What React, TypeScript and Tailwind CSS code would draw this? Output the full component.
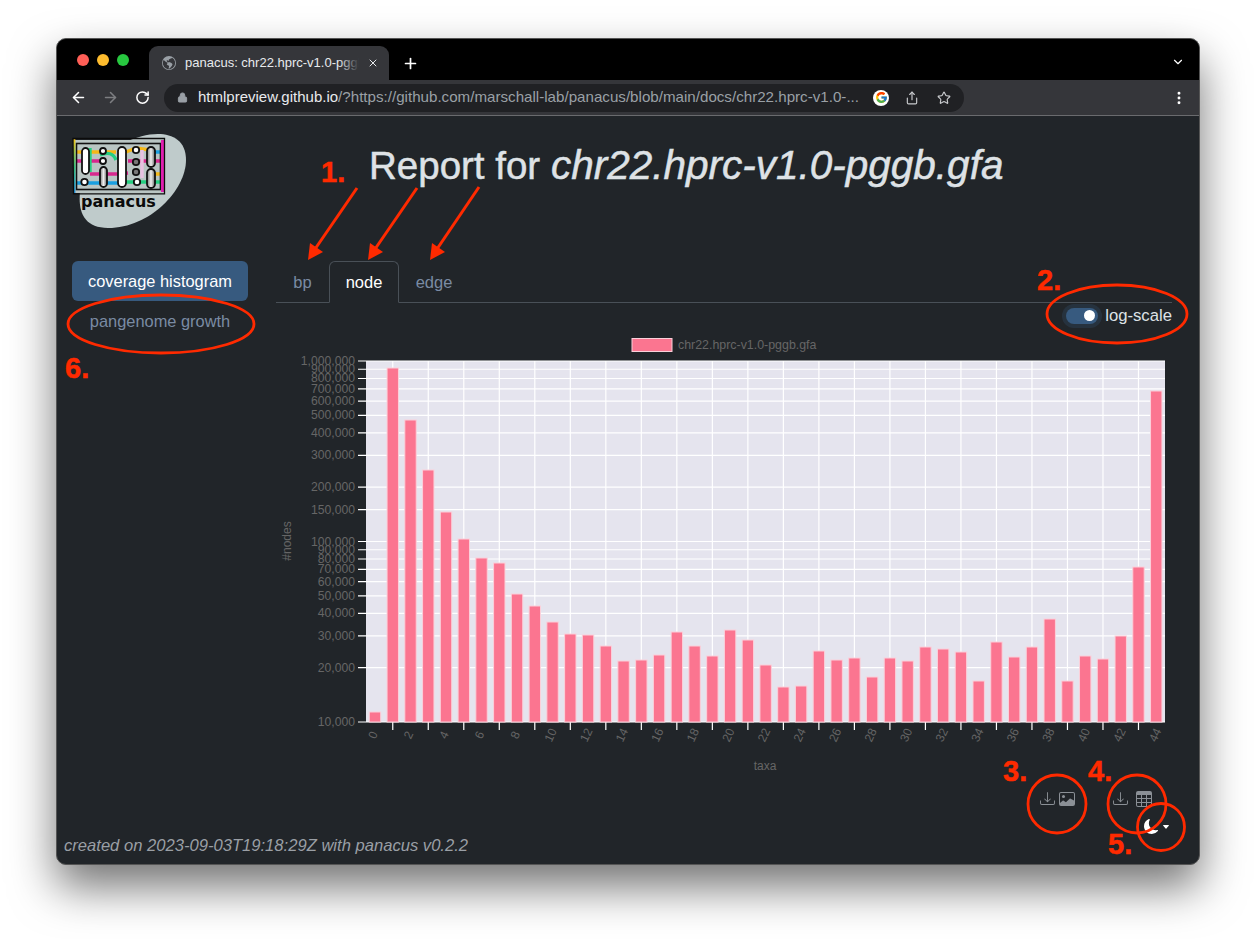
import React from "react";
import { ArrowLeft, ArrowRight, RotateCw, Lock, Share, Star, MoreVertical, ChevronDown, X, Plus } from "lucide-react";
import { BsDownload, BsImage, BsTable, BsMoonFill, BsGlobeAmericas, BsCaretDownFill } from "react-icons/bs";
import { FcGoogle } from "react-icons/fc";

const barTops = [
  712, 368, 420, 470, 512, 539, 558, 563, 594, 606, 622, 634, 635, 646, 661, 660, 655, 632, 646, 656, 630, 640, 665,
  687, 686, 651, 660, 658, 677, 658, 661, 647, 649, 652, 681, 642, 657, 647, 619, 681, 656, 659, 636, 567, 391,
];

const yTicks = [
  10000, 20000, 30000, 40000, 50000, 60000, 70000, 80000, 90000, 100000, 150000, 200000, 300000, 400000, 500000, 600000,
  700000, 800000, 900000, 1000000,
];

const yPos = (v: number) => 722 - (Math.log10(v) - 4) * 180.5;

function Logo() {
  return (
    <svg viewBox="70 130 120 100" className="w-[120px] h-[100px] -ml-[2px]">
      <defs>
        <linearGradient id="frame" x1="0" y1="0" x2="1" y2="0">
          <stop offset="0" stopColor="#f5c518" />
          <stop offset="0.45" stopColor="#f0a020" />
          <stop offset="0.75" stopColor="#e8352c" />
          <stop offset="1" stopColor="#e01fa0" />
        </linearGradient>
        <linearGradient id="frameLow" x1="0" y1="0" x2="1" y2="0">
          <stop offset="0" stopColor="#1a8fe0" />
          <stop offset="0.6" stopColor="#9a20d0" />
          <stop offset="1" stopColor="#e01fb0" />
        </linearGradient>
        <linearGradient id="frameLeft" x1="0" y1="0" x2="0" y2="1">
          <stop offset="0" stopColor="#f5c518" />
          <stop offset="0.5" stopColor="#30c070" />
          <stop offset="1" stopColor="#1a8fe0" />
        </linearGradient>
        <linearGradient id="pill" x1="0" y1="0" x2="1" y2="0">
          <stop offset="0" stopColor="#777" />
          <stop offset="0.5" stopColor="#eee" />
          <stop offset="1" stopColor="#666" />
        </linearGradient>
      </defs>
      <path d="M126 142C150 130 186 128 186 160C186 190 150 228 108 228C84 228 78 212 80 192Z" fill="#bfcbcb" />
      <rect x="74" y="140" width="89" height="53" fill="#b9c5c3" />
      <g fill="none" strokeWidth="3.4">
        <path d="M76 152H116" stroke="#f5b818" />
        <path d="M76 161H100M128 161H160" stroke="#d8288e" />
        <path d="M100 155Q112 150 116 160" stroke="#25cf80" />
        <path d="M90 174H118L128 173" stroke="#d8288e" />
        <path d="M126 152L136 148L150 150" stroke="#f5b818" />
        <path d="M76 183H118" stroke="#1a9fe0" />
        <path d="M126 182H160" stroke="#25cf80" />
        <path d="M142 150V178" stroke="#e8c0e0" />
        <path d="M90 148V172" stroke="#25cf80" />
        <path d="M155 152H162" stroke="#1a9fe0" />
        <path d="M155 174H162" stroke="#f5b818" />
      </g>
      <rect x="76.5" y="143.5" width="84" height="46" fill="none" stroke="#111" strokeWidth="1.6" />
      <path d="M74 140H163" fill="none" stroke="url(#frame)" strokeWidth="3" />
      <rect x="73" y="139" width="2.4" height="54" fill="url(#frameLeft)" />
      <path d="M162.5 140V192" fill="none" stroke="#e01fb0" strokeWidth="3" />
      <path d="M75 191.5H163" fill="none" stroke="url(#frameLow)" strokeWidth="3" />
      <path d="M73 138.5H164.5V193.8H73.5Z" fill="none" stroke="#0c0c0c" strokeWidth="1.3" />
      <g fill="#fff" stroke="#111" strokeWidth="1.8">
        <rect x="82" y="148" width="7" height="26" rx="3.5" />
        <circle cx="84.5" cy="182" r="3.2" />
        <circle cx="103" cy="151" r="3" />
        <circle cx="103" cy="161" r="3" />
        <rect x="100" y="167" width="7" height="20" rx="3.5" fill="url(#pill)" />
        <rect x="118" y="147" width="8" height="40" rx="4" />
        <circle cx="136" cy="150" r="3.2" />
        <circle cx="136" cy="162" r="3.2" fill="#777" />
        <circle cx="136" cy="172" r="3.2" fill="#777" />
        <circle cx="137" cy="182" r="3.2" />
        <rect x="147" y="147" width="8" height="20" rx="4" fill="url(#pill)" />
        <rect x="147" y="169" width="8" height="19" rx="4" fill="url(#pill)" />
      </g>
      <text x="81" y="207" fontFamily="'DejaVu Sans', sans-serif" fontWeight="700" fontSize="16" fill="#0b0b0b">
        panacus
      </text>
    </svg>
  );
}

function Chart() {
  const slot = 799 / 45;
  return (
    <svg viewBox="276 330 896 445" className="w-[896px] h-[445px] block" fontFamily="'Liberation Sans', sans-serif">
      <rect x="632" y="338.5" width="40" height="13" fill="#fb7590" stroke="#fbd0da" />
      <text x="678" y="349" fontSize="12.4" fill="#666">
        chr22.hprc-v1.0-pggb.gfa
      </text>
      <rect x="366" y="361" width="799" height="361" fill="#e5e4ee" />
      {yTicks.map((v) => (
        <g key={v}>
          <path d={`M358 ${yPos(v)}H1165`} stroke="#fff" strokeWidth="1.2" />
          <text x="355" y={yPos(v) + 4} fontSize="12.2" fill="#666" textAnchor="end">
            {v.toLocaleString("en-US")}
          </text>
        </g>
      ))}
      {Array.from({ length: 22 }).map((_, i) => {
        const x = 375 + slot * (2 * i + 1);
        return <path key={i} d={`M${x} 361V730`} stroke="#fff" strokeWidth="1.2" />;
      })}
      {Array.from({ length: 23 }).map((_, i) => {
        const lx = 373 + 35.55 * i;
        return (
          <text key={i} x={lx} y={739} fontSize="12" fill="#666" textAnchor="middle" transform={`rotate(-65 ${lx} 735)`}>
            {i * 2}
          </text>
        );
      })}
      {barTops.map((t, i) => (
        <rect
          key={i}
          x={375 + slot * i - 5.7}
          y={t}
          width={11.4}
          height={722 - t}
          fill="#fb7590"
          stroke="#fbd0da"
          strokeWidth="1"
        />
      ))}
      <text x="765" y="770" fontSize="12" fill="#666" textAnchor="middle">
        taxa
      </text>
      <text x="291" y="541" fontSize="12" fill="#666" textAnchor="middle" transform="rotate(-90 291 541)">
        #nodes
      </text>
    </svg>
  );
}

function Annotations() {
  const red = "#ff2a00";
  const labels: [string, number, number][] = [
    ["1.", 321, 182],
    ["2.", 1037, 290],
    ["3.", 1003, 781],
    ["4.", 1088, 781],
    ["5.", 1108, 854],
    ["6.", 65, 378],
  ];
  const arrows = [
    [357, 188, 308, 260],
    [417, 188, 368, 260],
    [479, 187, 430, 260],
  ];
  return (
    <svg viewBox="0 0 1256 939" className="absolute left-0 top-0 w-[1256px] h-[939px] pointer-events-none">
      {arrows.map(([a, b, c, d]) => (
        <g key={a}>
          <path d={`M${a} ${b}L${c + 5} ${d - 8}`} stroke={red} strokeWidth="3" />
          <path d={`M${c} ${d}L${c + 2} ${d - 17}L${c + 15} ${d - 8}Z`} fill={red} />
        </g>
      ))}
      <g fill="none" stroke={red} strokeWidth="2.8">
        <ellipse cx="1117" cy="314" rx="70" ry="29" />
        <ellipse cx="161" cy="324" rx="93" ry="29" />
        <circle cx="1057" cy="804" r="29" />
        <circle cx="1137" cy="804" r="29" />
        <circle cx="1161" cy="827" r="23.5" />
      </g>
      {labels.map(([t, x, y]) => (
        <text
          key={t}
          x={x}
          y={y}
          fill={red}
          stroke={red}
          strokeWidth="0.5"
          fontFamily="'Liberation Sans', sans-serif"
          fontWeight="700"
          fontSize="29"
        >
          {t}
        </text>
      ))}
    </svg>
  );
}

export default function App() {
  return (
    <div className="relative w-[1256px] h-[939px] overflow-hidden bg-white pt-[38px] pl-[56px] font-['Liberation_Sans',sans-serif]">
      <div className="w-[1144px] h-[827px] rounded-[10px] overflow-hidden flex flex-col bg-[#212529] border border-[#555] shadow-[0_22px_45px_rgba(0,0,0,0.55)]">
        {/* tab strip */}
        <div className="h-[41px] shrink-0 bg-black flex items-end pl-[20px]">
          <div className="flex gap-2 h-[12px] self-start mt-[15px]">
            <span className="w-3 h-3 rounded-full bg-[#ff5f57]" />
            <span className="w-3 h-3 rounded-full bg-[#febc2e]" />
            <span className="w-3 h-3 rounded-full bg-[#28c840]" />
          </div>
          <div className="ml-[20px] w-[240px] h-[34px] bg-[#35363a] rounded-t-[9px] flex items-center pl-[13px] text-[13px] text-[#e8eaed]">
            <BsGlobeAmericas className="w-[14px] h-[14px] text-[#9aa0a6] shrink-0" />
            <span className="relative ml-[9px] w-[174px] overflow-hidden whitespace-nowrap">
              panacus: chr22.hprc-v1.0-pggb.gfa
              <span className="absolute right-0 top-0 bottom-0 w-[20px] bg-gradient-to-r from-transparent to-[#35363a]" />
            </span>
            <X className="w-[12px] h-[12px] ml-[8px] shrink-0" strokeWidth={2} />
          </div>
          <Plus className="w-[17px] h-[17px] text-white ml-[13px] mb-[8px]" strokeWidth={2.4} />
          <ChevronDown className="w-[14px] h-[14px] text-white ml-auto mr-[14px] mb-[11px]" strokeWidth={2} />
        </div>
        {/* toolbar */}
        <div className="h-[36px] shrink-0 bg-[#35363a] border-b border-[#6a6b6e] flex items-center pl-[13px] pr-[12px] text-white">
          <ArrowLeft className="w-[17px] h-[17px]" strokeWidth={2.2} />
          <ArrowRight className="w-[17px] h-[17px] ml-[15px] text-[#7d7e81]" strokeWidth={2.2} />
          <RotateCw className="w-[15px] h-[15px] ml-[16px]" strokeWidth={2.4} />
          <div className="ml-[14px] w-[800px] h-[28px] rounded-full bg-[#202124] flex items-center pl-[13px] text-[15px] whitespace-nowrap">
            <Lock className="w-[11px] h-[11px] text-[#9aa0a6] shrink-0" fill="#9aa0a6" />
            <span className="ml-[10px] text-[#e8eaed]">htmlpreview.github.io</span>
            <span className="text-[#9aa0a6] text-[15.15px]">/?https://github.com/marschall-lab/panacus/blob/main/docs/chr22.hprc-v1.0-...</span>
            <span className="ml-[14px] w-[16px] h-[16px] rounded-full bg-white flex items-center justify-center shrink-0">
              <FcGoogle className="w-[13px] h-[13px]" />
            </span>
            <Share className="w-[14px] h-[14px] ml-[16px] text-[#c8cacd] shrink-0" />
            <Star className="w-[14px] h-[14px] ml-[18px] text-[#c8cacd] shrink-0" />
          </div>
          <MoreVertical className="w-[16px] h-[16px] ml-auto" strokeWidth={2.4} />
        </div>
        {/* page */}
        <div className="flex-1 flex flex-col">
          <div className="flex">
            <div className="w-[219px] shrink-0 pl-[15px] pr-[28px] pt-[14px]">
              <Logo />
              <div className="mt-[31px] h-[40px] rounded-[6px] bg-[#375a7f] text-white text-[16.4px] flex items-center justify-center">
                coverage histogram
              </div>
              <div className="h-[40px] text-[#7a8ba3] text-[16.4px] flex items-center justify-center">pangenome growth</div>
            </div>
            <div className="w-[896px] flex flex-col">
              <h1 className="pl-[93px] pt-[24px] h-[145px] text-[38.5px] leading-[50px] text-[#dee2e6] whitespace-nowrap [-webkit-text-stroke:0.5px_#dee2e6]">
                Report for <em className="text-[40.5px]">chr22.hprc-v1.0-pggb.gfa</em>
              </h1>
              <div className="flex border-b border-[#495057] h-[42px] text-[16.5px]">
                <div className="w-[53px] pt-[1px] flex items-center justify-center text-[#7a8ba3]">bp</div>
                <div className="w-[70px] h-[42px] pt-[1px] flex items-center justify-center text-white border border-[#495057] border-b-[#212529] rounded-t-[6px]">
                  node
                </div>
                <div className="w-[70px] pt-[1px] flex items-center justify-center text-[#7a8ba3]">edge</div>
              </div>
              <div className="flex justify-end items-center h-[25px] mb-[2px] text-[16.7px] text-[#dee2e6]">
                <span className="w-[32px] h-[16px] rounded-full bg-[#375a7f] flex items-center justify-end pr-[3px] shadow-[0_0_0_4px_rgba(55,90,127,0.25)]">
                  <span className="w-[11px] h-[11px] rounded-full bg-white" />
                </span>
                <span className="ml-[7px]">log-scale</span>
              </div>
              <Chart />
              <div className="flex justify-end text-[#8b9096] pr-[20px] pt-[16px]">
                <BsDownload className="w-[15px] h-[15px]" />
                <BsImage className="w-[16px] h-[16px] ml-[4px]" />
                <span className="w-[38px]" />
                <BsDownload className="w-[15px] h-[15px]" />
                <BsTable className="w-[16px] h-[16px] ml-[8px]" />
              </div>
            </div>
          </div>
          <div className="flex items-start justify-between pl-[7px] pr-[29px] mt-[12px]">
            <span className="italic text-[16.6px] leading-[24px] mt-[15px] text-[#9a9fa5]">
              created on 2023-09-03T19:18:29Z with panacus v0.2.2
            </span>
            <span className="flex items-center text-white">
              <BsMoonFill className="w-[15px] h-[15px]" />
              <BsCaretDownFill className="w-[8px] h-[8px] ml-[3px]" />
            </span>
          </div>
        </div>
      </div>
      <Annotations />
    </div>
  );
}
